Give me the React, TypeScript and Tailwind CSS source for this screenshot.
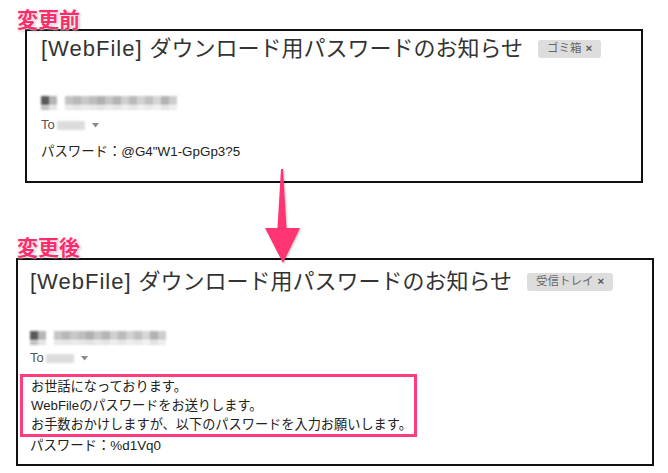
import React from "react";

const FONT = "font-[family-name:'Liberation_Sans','Noto_Sans_CJK_JP',sans-serif]";

// pixelated, blurred sender address
const senderShades = [
  "bg-[#5a5a5a]", "bg-[#b5b5b5]", "bg-white", "bg-[#c4c4c4]", "bg-[#b8b8b8]", "bg-[#c8c8c8]",
  "bg-[#bdbdbd]", "bg-[#b0b0b0]", "bg-[#c6c6c6]", "bg-[#b4b4b4]", "bg-[#cfcfcf]", "bg-[#bababa]",
  "bg-[#d2d2d2]", "bg-[#c0c0c0]", "bg-[#d6d6d6]", "bg-[#b2b2b2]", "bg-[#cdcdcd]",
];

function SenderBlur() {
  return (
    <div className="flex flex-col gap-[1px] blur-[0.8px]">
      <div className="flex h-[9px]">
        {senderShades.map((c, i) => (
          <div key={i} className={`h-full w-[8px] ${c}`} />
        ))}
      </div>
      <div className="flex h-[4px] opacity-40">
        {senderShades.map((c, i) => (
          <div key={i} className={`h-full w-[8px] ${c}`} />
        ))}
      </div>
    </div>
  );
}

function ToRow() {
  return (
    <div className="flex h-[16px] items-center text-[13px] text-[#555]">
      <span>To</span>
      <div className="ml-[2px] h-[9px] w-[28px] bg-[#dcdcdc] blur-[0.8px]" />
      <svg className="ml-[7px]" width="7" height="5" viewBox="0 0 7 5">
        <path d="M0 0 L7 0 L3.5 4.5 Z" fill="#8a8a8a" />
      </svg>
    </div>
  );
}

function Label({ text, className }: { text: string; className?: string }) {
  return (
    <div
      className={`ml-[17px] h-[19px] text-[21px] font-bold leading-[19px] text-[#fd2d6d] [text-shadow:0_0_2px_#fff,0_0_2px_#fff,1px_1px_3px_rgba(0,0,0,0.35)] ${className ?? ""}`}
    >
      {text}
    </div>
  );
}

function Title({ badge }: { badge: string }) {
  return (
    <div className="flex h-[28px] items-center text-[22px] leading-[28px] text-[#333]">
      <span className="tracking-[1px]">[WebFile]</span>
      <span className="ml-[7px]">ダウンロード用パスワードのお知らせ</span>
      <span className="ml-[15px] flex h-[18px] items-center gap-[4px] rounded-[3px] bg-[#dddddd] px-[9px] text-[11.5px] leading-none text-[#666]">
        {badge}
        <span className="font-bold text-[#555]">×</span>
      </span>
    </div>
  );
}

export default function App() {
  return (
    <div className={`relative h-[473px] w-[668px] overflow-hidden bg-white pt-[10px] ${FONT}`}>
      <Label text="変更前" />
      <div className="ml-[25px] h-[154px] w-[618px] border-2 border-[#111] pl-[14px] pt-[4px]">
        <Title badge="ゴミ箱" />
        <div className="mt-[33px]">
          <SenderBlur />
        </div>
        <div className="mt-[7px]">
          <ToRow />
        </div>
        <div className="mt-[10px] h-[18px] text-[13.4px] leading-[18px] text-[#222]">
          パスワード：@G4"W1-GpGp3?5
        </div>
      </div>

      <Label text="変更後" className="mt-[55px] h-[20px]" />
      <div className="ml-[16px] h-[208px] w-[638px] border-2 border-[#111] pl-[12px] pt-[8px]">
        <Title badge="受信トレイ" />
        <div className="mt-[35px]">
          <SenderBlur />
        </div>
        <div className="mt-[5px]">
          <ToRow />
        </div>
        <div className="-ml-[10px] mt-[8px] w-[397px] whitespace-nowrap border-[3px] border-[#ff3d7c] pl-[8px] text-[13.2px] leading-[19px] text-[#222]">
          <div>お世話になっております。</div>
          <div>WebFileのパスワードをお送りします。</div>
          <div>お手数おかけしますが、以下のパスワードを入力お願いします。</div>
        </div>
        <div className="h-[18px] text-[13.4px] leading-[18px] text-[#222]">パスワード：%d1Vq0</div>
      </div>

      {/* arrow between the two panels */}
      <svg
        className="absolute left-[262px] top-[166px] drop-shadow-[1px_1px_1px_rgba(0,0,0,0.25)]"
        width="42"
        height="100"
        viewBox="0 0 42 100"
      >
        <path d="M19 3 L21 3 L24.5 62 L38 62 L21 97 L3 62 L15.5 62 Z" fill="#ff3573" />
      </svg>
    </div>
  );
}
